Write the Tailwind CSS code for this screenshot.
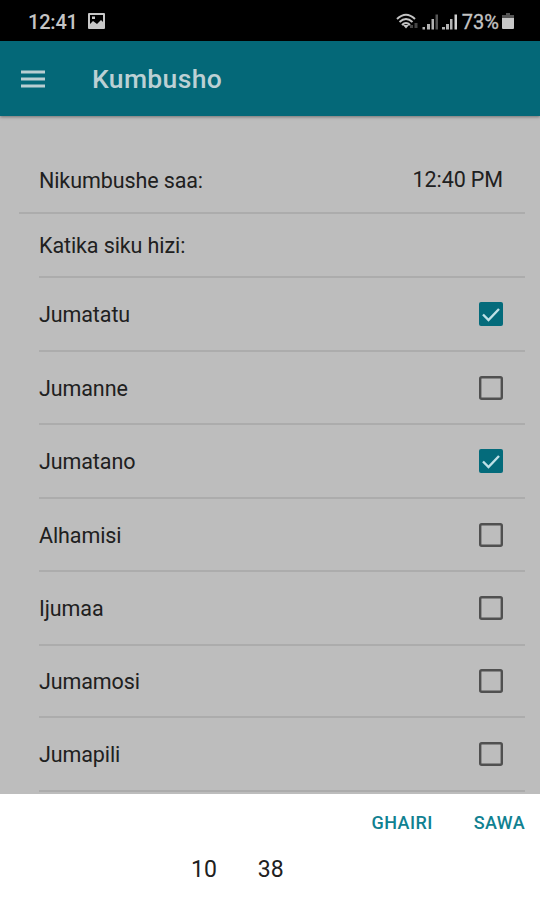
<!DOCTYPE html>
<html lang="sw">
<head>
<meta charset="utf-8">
<title>Kumbusho</title>
<script src="https://cdn.jsdelivr.net/npm/@tailwindcss/browser@4"></script>
</head>
<body class="w-[540px] h-[900px] overflow-hidden bg-[#bdbdbd] font-['Roboto',sans-serif] text-[#202020] flex flex-col whitespace-nowrap">
  <div class="h-[41px] shrink-0 bg-black text-[#c4c4c4] flex items-center pl-7 pr-[26px] pt-[2px]">
    <span class="text-[20px] font-medium leading-none tracking-[-0.2px]">12:41</span>
    <svg class="ml-[10px] mb-[1px] w-[17px] h-[16px]" viewBox="0 0 17 16"><path fill="#c8c8c8" fill-rule="evenodd" d="M1 0h15q1 0 1 1v14q0 1-1 1H1q-1 0-1-1V1Q0 0 1 0ZM2 2v9l3-3 4 3 4-4 2 2V2ZM4 3.500h3v2.500H4Z"/></svg>
    <svg class="ml-auto w-[65px] h-[18px]" viewBox="0 0 65 18">
      <g fill="none" stroke="#c4c4c4" stroke-width="2"><path d="M1 6Q10 -2.500 19 6"/><path d="M3.500 9Q10 3 16.500 9"/><path d="M6 12Q10 8 14 12"/></g>
      <path fill="#c4c4c4" d="M7 12L10 15.500l3-3.500Z"/>
      <path fill="#444" d="M14 12h3v3h-3ZM18.500 10h3v5h-3Z"/>
      <path fill="#b4b4b4" d="M26.500 14h2.500v2.500h-2.500ZM31 11h3v5.500h-3ZM35.500 6h2.500v10.500h-2.500ZM46 14h3v2.500h-3ZM50 11h3v5.500h-3ZM54 6h2.500v10.500H54Z"/>
      <path fill="#d0d0d0" d="M58.500 1.500H61v15h-2.500Z"/>
      <path fill="#555" d="M39.500 1.500H42v15h-2.500Z"/>
    </svg>
    <span class="ml-[1px] text-[20px] leading-none [-webkit-text-stroke:0.3px_#c4c4c4]">73%</span>
    <svg class="ml-[3px] mb-[1px] w-[12px] h-[16px]" viewBox="0 0 12 16"><path fill="#555" d="M4 0h4v2h4v4H0V2h4Z"/><path fill="#c8c8c8" d="M0 5h12v10q0 1-1 1H1q-1 0-1-1Z"/></svg>
  </div>
  <header class="h-[75px] shrink-0 bg-[#046878] flex items-center pl-[21px] shadow-[0_1px_3px_rgba(0,0,0,0.4)] text-[#bcd0d4]">
    <svg class="w-[24px] h-[18px]" viewBox="0 0 24 18" fill="#b9ced2"><path d="M0 .5h24v3H0ZM0 7.500h24v3H0ZM0 14.500h24v3H0Z"/></svg>
    <h1 class="ml-[47px] mt-[2px] text-[26.500px] tracking-[0.35px] font-medium leading-none">Kumbusho</h1>
  </header>
  <main class="pt-[31px] pl-[19px] pr-[15px] text-[21.500px] leading-none tracking-[-0.1px]">
    <div class="h-[67px] flex items-center justify-between border-b-2 border-[#acacac] pl-5 pr-[22px]">
      <span class="pt-[2px]">Nikumbushe saa:</span><span class="pt-[1px]">12:40 PM</span>
    </div>
    <div class="ml-5">
      <div class="h-[64px] pt-[2px] flex items-center border-b-2 border-[#acacac]">Katika siku hizi:</div>
      <div id="days"></div>
    </div>
  </main>
  <section class="absolute left-0 top-[794px] w-[540px] h-[106px] bg-white">
    <div class="flex justify-end gap-[41px] pr-[15px] pt-[20px] text-[18px] leading-none tracking-[0.4px] font-medium text-[#108191]">
      <button>GHAIRI</button><button>SAWA</button>
    </div>
    <div class="flex gap-[41px] pl-[191px] pt-[26px] text-[23px] leading-none"><span>10</span><span>38</span></div>
  </section>
  <template id="on"><svg class="w-6 h-6" viewBox="0 0 24 24"><rect width="24" height="24" rx="2" fill="#046b7b"/><path d="M4 12.500L9.500 18 20 7" fill="none" stroke="#bfe0e6" stroke-width="2.400"/></svg></template>
  <template id="off"><svg class="w-6 h-6" viewBox="0 0 24 24"><rect x="1.200" y="1.200" width="21.600" height="21.600" rx="1.500" fill="none" stroke="#505050" stroke-width="2.400"/></svg></template>
  <script>
    const days = [['Jumatatu',1,74],['Jumanne',0,73],['Jumatano',1,74],['Alhamisi',0,73],['Ijumaa',0,74],['Jumamosi',0,72],['Jumapili',0,74]];
    for (const [name, on, height] of days) {
      const row = document.createElement('div');
      row.className = 'flex items-center justify-between border-b-2 border-[#acacac] pr-[22px]';
      row.style.height = height + 'px';
      const label = document.createElement('span');
      label.className = 'pt-[2px]';
      label.textContent = name;
      row.append(label, document.getElementById(on ? 'on' : 'off').content.cloneNode(true));
      document.getElementById('days').append(row);
    }
  </script>
</body>
</html>
